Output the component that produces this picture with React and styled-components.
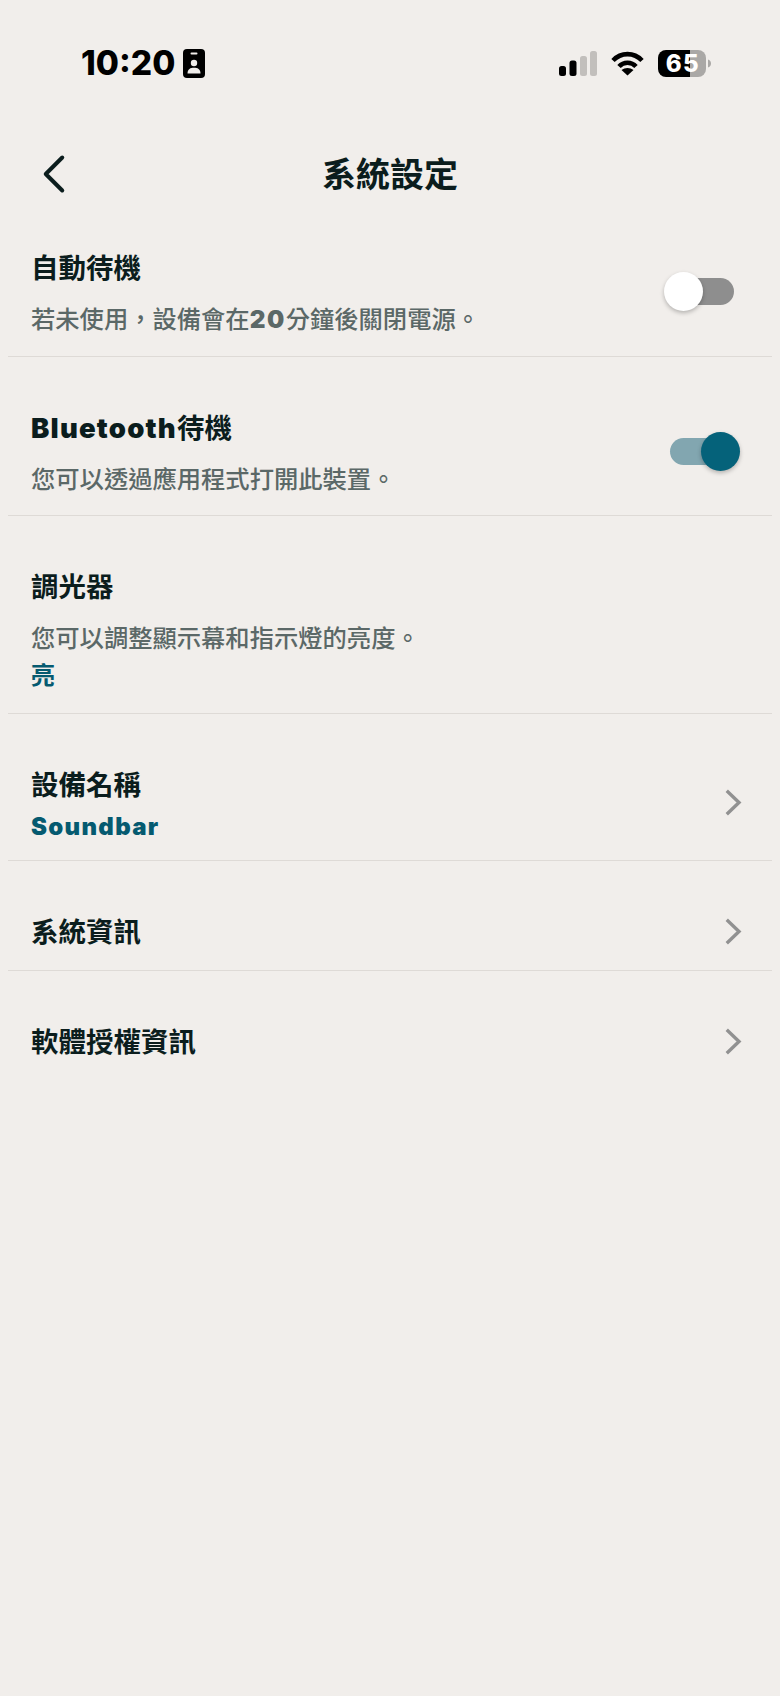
import styled, { createGlobalStyle } from 'styled-components'
import { LuChevronLeft } from 'react-icons/lu'

const GlobalStyle = createGlobalStyle`
  html, body {
    margin: 0;
    padding: 0;
    background: #f1eeeb;
  }
  body {
    font-family: "Inter", "Noto Sans CJK TC", sans-serif;
  }
`

const Page = styled.div`
  width: 780px;
  height: 1696px;
  overflow: hidden;
  background: #f1eeeb;
  color: #0b1d1d;
`

const StatusBar = styled.div`
  height: 153px;
  box-sizing: border-box;
  padding: 46px 69px 0 81px;
  display: flex;
  justify-content: space-between;
  align-items: flex-start;
`

const StatusLeft = styled.div`
  display: flex;
  align-items: center;
  gap: 8px;
  height: 34px;
`

const Time = styled.span`
  font-size: 33.5px;
  line-height: 34px;
  font-weight: 800;
  color: #000;
  letter-spacing: 0;
`

const StatusRight = styled.div`
  display: flex;
  align-items: center;
  gap: 14px;
  height: 34px;
`

const Battery = styled.div`
  position: relative;
  width: 53px;
  height: 27px;
`

const BatteryText = styled.span`
  position: absolute;
  left: 1px;
  width: 48px;
  top: 0;
  text-align: center;
  font-size: 24px;
  line-height: 27px;
  font-weight: 800;
  color: #fff;
  letter-spacing: 1.5px;
`

const Header = styled.header`
  height: 44px;
  padding-bottom: 4px;
  box-sizing: border-box;
  display: flex;
  align-items: center;
  justify-content: center;
  position: relative;
`

const BackButton = styled.div`
  position: absolute;
  left: 21px;
  top: -12px;
  display: flex;
  color: #0b1d1d;
`

const PageTitle = styled.h1`
  margin: 0;
  font-size: 34px;
  line-height: 40px;
  font-weight: 700;
  font-family: "Noto Sans CJK TC", sans-serif;
`

const List = styled.div`
  margin: 0 8px;
`

const Row = styled.div`
  display: flex;
  align-items: center;
  justify-content: space-between;
  padding: 50px 0 ${p => p.$bottom || '19px'} 23px;
  border-bottom: ${p => p.$last ? 'none' : '1px solid #dedad6'};
`

const RowText = styled.div`
  display: flex;
  flex-direction: column;
`

const Title = styled.div`
  font-size: 27.5px;
  line-height: 38px;
  font-weight: 700;
  color: #0b1d1d;
  font-family: "Noto Sans CJK TC", sans-serif;
`

const Latin = styled.span`
  font-family: "Inter", sans-serif;
  font-weight: 900;
  line-height: 0;
  letter-spacing: ${p => p.$wide || '1.2px'};
`

const Description = styled.div`
  margin-top: 15px;
  font-size: 24.3px;
  line-height: 36px;
  font-weight: 500;
  color: #5b6867;
  white-space: nowrap;
  font-family: "Noto Sans CJK TC", sans-serif;
`

const Value = styled.div`
  margin-top: ${p => p.$gap || '1px'};
  font-size: 24px;
  line-height: 36px;
  font-weight: 700;
  color: #055a70;
  font-family: "Noto Sans CJK TC", sans-serif;
`

const SwitchTrack = styled.div`
  position: relative;
  width: 65px;
  height: 27px;
  border-radius: 14px;
  margin-right: ${p => p.$on ? '37px' : '38px'};
  background: ${p => p.$on ? '#82a6b0' : '#8e8e8e'};
`

const SwitchKnob = styled.div`
  position: absolute;
  top: -6px;
  ${p => p.$on ? 'right: -5px;' : 'left: -5px;'}
  width: 39px;
  height: 39px;
  border-radius: 50%;
  background: ${p => p.$on ? '#05627a' : '#fff'};
  box-shadow: 0 2px 4px rgba(0, 0, 0, 0.25);
`

const Chevron = styled.svg`
  width: 17px;
  height: 27px;
  margin-right: 30px;
  margin-top: ${p => p.$drop || '0'};
  color: #919191;
`

function ChevronRight({ drop }) {
  return (
    <Chevron viewBox="0 0 17 27" fill="none" $drop={drop}>
      <path d="M3 3 L14 13.5 L3 24" stroke="currentColor" strokeWidth="3.4" strokeLinecap="square" strokeLinejoin="miter" />
    </Chevron>
  )
}

function BadgeIcon() {
  return (
    <svg width="22" height="29" viewBox="0 0 22 29">
      <rect width="22" height="29" rx="4" fill="#000" />
      <rect x="7.5" y="3.5" width="7" height="2" rx="1" fill="#f1eeeb" />
      <circle cx="11" cy="14" r="3.2" fill="#f1eeeb" />
      <path d="M4.5 24.5 C4.5 20 7.5 18.8 11 18.8 C14.5 18.8 17.5 20 17.5 24.5 Z" fill="#f1eeeb" />
    </svg>
  )
}

function SignalIcon() {
  return (
    <svg width="38" height="25" viewBox="0 0 38 25">
      <rect x="0" y="15" width="7" height="10" rx="2.5" fill="#000" />
      <rect x="10.5" y="9.5" width="7" height="15.5" rx="2.5" fill="#000" />
      <rect x="21" y="5" width="7" height="20" rx="2.5" fill="#c2bfbc" />
      <rect x="31" y="0" width="7" height="25" rx="2.5" fill="#c2bfbc" />
    </svg>
  )
}

function WifiIcon() {
  return (
    <svg width="33" height="25" viewBox="0 0 33 25" fill="none" stroke="#000" strokeWidth="4.6">
      <path d="M2 9.5 C10 1 23 1 31 9.5" />
      <path d="M8 15.5 C12.5 10.5 20.5 10.5 25 15.5" />
      <path d="M16.5 24.5 L10.5 19 C14 16.3 19 16.3 22.5 19 Z" fill="#000" stroke="none" />
    </svg>
  )
}

function BatteryIcon() {
  return (
    <svg width="53" height="27" viewBox="0 0 53 27">
      <defs>
        <clipPath id="battery-body">
          <rect width="48" height="27" rx="8" />
        </clipPath>
      </defs>
      <g clipPath="url(#battery-body)">
        <rect width="32" height="27" fill="#000" />
        <rect x="32" width="16" height="27" fill="#aaa8a6" />
      </g>
      <path d="M50 9.5 C52.5 10.5 53 12 53 13.5 C53 15 52.5 16.5 50 17.5 Z" fill="#aaa8a6" />
    </svg>
  )
}

function Switch({ on }) {
  return (
    <SwitchTrack $on={on}>
      <SwitchKnob $on={on} />
    </SwitchTrack>
  )
}

export default function App() {
  return (
    <Page>
      <GlobalStyle />
      <StatusBar>
        <StatusLeft>
          <Time>10:20</Time>
          <BadgeIcon />
        </StatusLeft>
        <StatusRight>
          <SignalIcon />
          <WifiIcon />
          <Battery>
            <BatteryIcon />
            <BatteryText>65</BatteryText>
          </Battery>
        </StatusRight>
      </StatusBar>

      <Header>
        <BackButton>
          <LuChevronLeft size={66} strokeWidth={1.45} />
        </BackButton>
        <PageTitle>系統設定</PageTitle>
      </Header>

      <List>
        <Row $bottom="20px">
          <RowText>
            <Title>自動待機</Title>
            <Description>若未使用，設備會在<Latin $wide="1.5px">20</Latin>分鐘後關閉電源。</Description>
          </RowText>
          <Switch />
        </Row>
        <Row>
          <RowText>
            <Title><Latin>Bluetooth</Latin>待機</Title>
            <Description>您可以透過應用程式打開此裝置。</Description>
          </RowText>
          <Switch on />
        </Row>
        <Row $bottom="21px">
          <RowText>
            <Title>調光器</Title>
            <Description>您可以調整顯示幕和指示燈的亮度。</Description>
            <Value>亮</Value>
          </RowText>
        </Row>
        <Row $bottom="17px">
          <RowText>
            <Title>設備名稱</Title>
            <Value $gap="5px"><Latin $wide="1.3px">Soundbar</Latin></Value>
          </RowText>
          <ChevronRight drop="-3px" />
        </Row>
        <Row $bottom="21px">
          <RowText>
            <Title>系統資訊</Title>
          </RowText>
          <ChevronRight drop="3px" />
        </Row>
        <Row $last>
          <RowText>
            <Title>軟體授權資訊</Title>
          </RowText>
          <ChevronRight drop="3px" />
        </Row>
      </List>
    </Page>
  )
}
